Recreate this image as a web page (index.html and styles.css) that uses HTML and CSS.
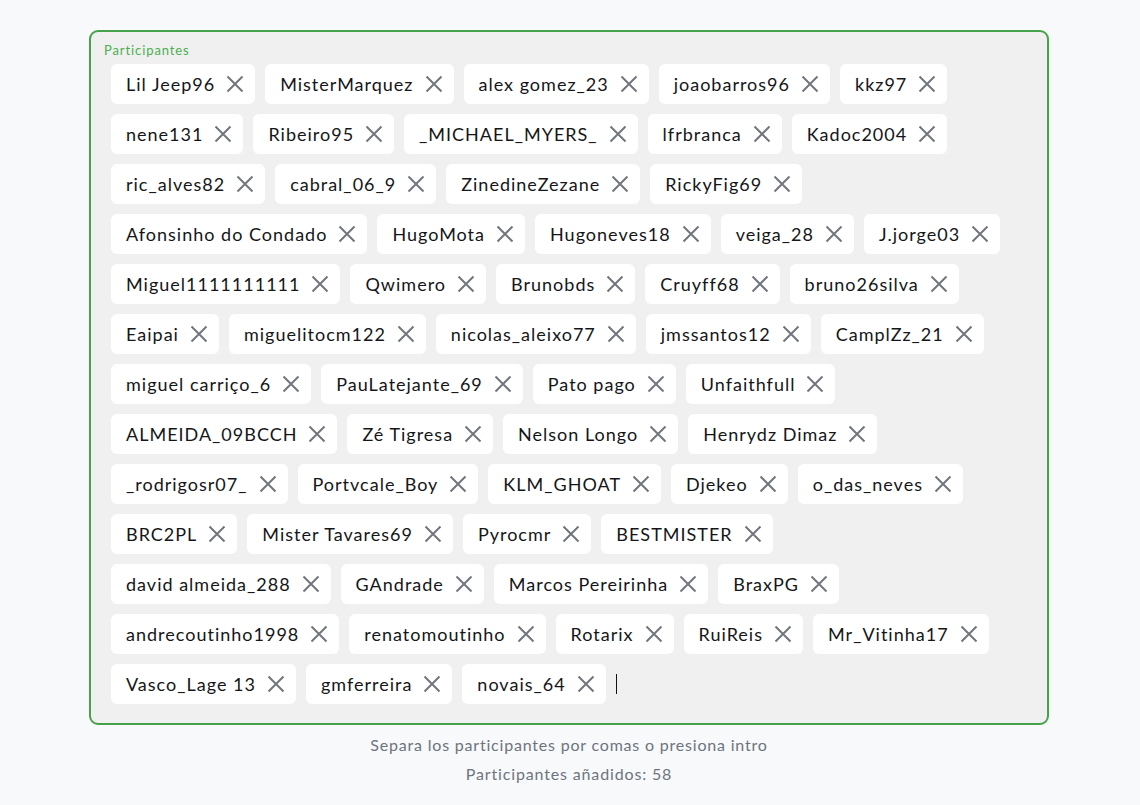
FILE: index.html
```html
<!DOCTYPE html>
<html lang="es">
<head>
<meta charset="utf-8">
<title>Participantes</title>
<link rel="stylesheet" href="styles.css">
</head>
<body>
<main class="page">
  <section class="field">
    <label class="field-label">Participantes</label>
    <div class="chips" id="chips"></div>
  </section>
  <p class="hint">Separa los participantes por comas o presiona intro</p>
  <p class="count">Participantes añadidos: 58</p>
</main>
<script src="app.js"></script>
</body>
</html>
```
FILE: app.js
```js
const rows = [
  ["Lil Jeep96","MisterMarquez","alex gomez_23","joaobarros96","kkz97"],
  ["nene131","Ribeiro95","_MICHAEL_MYERS_","lfrbranca","Kadoc2004"],
  ["ric_alves82","cabral_06_9","ZinedineZezane","RickyFig69"],
  ["Afonsinho do Condado","HugoMota","Hugoneves18","veiga_28","J.jorge03"],
  ["Miguel1111111111","Qwimero","Brunobds","Cruyff68","bruno26silva"],
  ["Eaipai","miguelitocm122","nicolas_aleixo77","jmssantos12","CamplZz_21"],
  ["miguel carriço_6","PauLatejante_69","Pato pago","Unfaithfull"],
  ["ALMEIDA_09BCCH","Zé Tigresa","Nelson Longo","Henrydz Dimaz"],
  ["_rodrigosr07_","Portvcale_Boy","KLM_GHOAT","Djekeo","o_das_neves"],
  ["BRC2PL","Mister Tavares69","Pyrocmr","BESTMISTER"],
  ["david almeida_288","GAndrade","Marcos Pereirinha","BraxPG"],
  ["andrecoutinho1998","renatomoutinho","Rotarix","RuiReis","Mr_Vitinha17"],
  ["Vasco_Lage 13","gmferreira","novais_64"]
];
const wrap = document.getElementById("chips");
const icon = '<svg viewBox="0 0 24 24" width="24" height="24" aria-hidden="true"><path d="M4.5 4.5l15 15M19.5 4.5l-15 15" stroke="currentColor" stroke-width="2" fill="none"/></svg>';
rows.forEach((row, i) => {
  const r = document.createElement("div");
  r.className = "chip-row";
  row.forEach(n => {
    const c = document.createElement("span");
    c.className = "chip";
    c.innerHTML = '<span class="chip-text"></span><span class="chip-x">' + icon + '</span>';
    c.querySelector(".chip-text").textContent = n;
    r.appendChild(c);
  });
  if (i === rows.length - 1) {
    const cur = document.createElement("span");
    cur.className = "cursor";
    r.appendChild(cur);
  }
  wrap.appendChild(r);
});
```
FILE: styles.css
```css
html, body { margin: 0; padding: 0; }
body {
  background: #f8f9fa;
  font-family: "Lato", "Liberation Sans", sans-serif;
  color: #1f2328;
}
.page {
  width: 962px;
  box-sizing: border-box;
  padding: 30px 2px 0 0;
  margin: 0 auto;
}
.field {
  border: 2px solid #46a24a;
  border-radius: 9px;
  background: #f0f0f0;
  padding: 10px 20px 19px 20px;
  box-sizing: border-box;
  height: 695px;
}
.field-label {
  display: block;
  color: #4caf50;
  font-size: 13px;
  letter-spacing: 0.9px;
  line-height: 16px;
  margin-left: -7px;
  margin-bottom: 6px;
}
.chips {
  display: flex;
  flex-direction: column;
  gap: 10px;
}
.chip-row {
  display: flex;
  gap: 10px;
  align-items: center;
}
.chip {
  display: inline-flex;
  align-items: center;
  height: 40px;
  box-sizing: border-box;
  padding: 0 8px 0 15px;
  background: #ffffff;
  border-radius: 6px;
  font-size: 18px;
  letter-spacing: 1px;
  color: #141619;
}
.chip-text { white-space: nowrap; }
.chip-x {
  display: inline-flex;
  margin-left: 8px;
  color: #72767d;
}
.cursor {
  display: inline-block;
  width: 1px;
  height: 20px;
  background: #111;
}
.hint, .count {
  text-align: center;
  color: #6c7480;
  font-size: 16px;
  letter-spacing: 0.8px;
  margin: 0;
}
.hint { margin-top: 10px; line-height: 20px; }
.count { margin-top: 9px; line-height: 20px; letter-spacing: 0.85px; }
```
